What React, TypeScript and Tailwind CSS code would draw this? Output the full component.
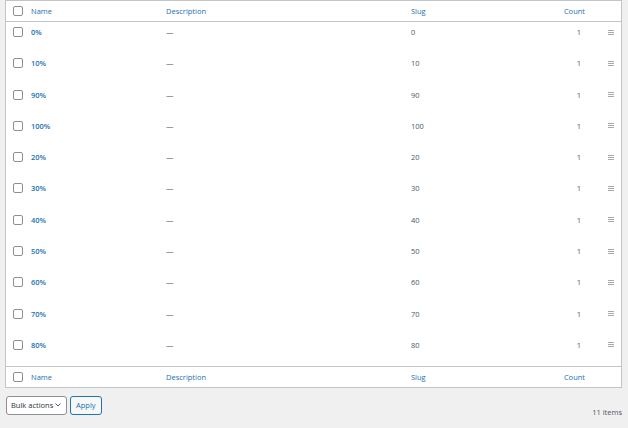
import React from "react";

const rows = [
  ["0%", "0"],
  ["10%", "10"],
  ["90%", "90"],
  ["100%", "100"],
  ["20%", "20"],
  ["30%", "30"],
  ["40%", "40"],
  ["50%", "50"],
  ["60%", "60"],
  ["70%", "70"],
  ["80%", "80"],
];

function Check() {
  return <div className="w-[10px] h-[10px] rounded-[2px] border border-[#8c8f94] bg-white" />;
}

function Handle() {
  return (
    <div className="flex flex-col gap-[1px] w-[6px]">
      <div className="h-[1px] bg-[#a7aaad]" />
      <div className="h-[1px] bg-[#a7aaad]" />
      <div className="h-[1px] bg-[#a7aaad]" />
    </div>
  );
}

function HeadRow({ top }: { top?: boolean }) {
  return (
    <div
      className={`flex items-center h-[21px] text-[#2271b1] ${top ? "border-b" : "border-t"} border-[#c3c4c7]`}
    >
      <div className="w-[25px] pl-[7px] flex items-center">
        <Check />
      </div>
      <div className="w-[135px]">Name</div>
      <div className="w-[245px]">Description</div>
      <div className="w-[120px]">Slug</div>
      <div className="w-[54px] text-right">Count</div>
    </div>
  );
}

export default function App() {
  return (
    <div
      className="w-[628px] h-[428px] bg-[#f0f0f1] overflow-hidden text-[7.5px] leading-[10px] text-[#50575e]"
      style={{ fontFamily: '"Open Sans", "Noto Sans", sans-serif' }}
    >
      <div className="ml-[5px] w-[617px] bg-white border border-[#c3c4c7]">
        <HeadRow top />
        {rows.map(([name, slug]) => (
          <div key={name} className="flex items-start h-[31.3px] pt-[5px]">
            <div className="w-[25px] pl-[7px] h-[10px] flex items-center">
              <Check />
            </div>
            <div className="w-[135px] text-[#2271b1] font-semibold">{name}</div>
            <div className="w-[245px]">—</div>
            <div className="w-[120px]">{slug}</div>
            <div className="w-[54px] text-right pr-[4px]">1</div>
            <div className="ml-[23px] h-[10px] flex items-center">
              <Handle />
            </div>
          </div>
        ))}
        <HeadRow />
      </div>
      <div className="flex items-center mt-[5px] ml-[6px] mr-[6px]">
        <div className="flex items-center justify-between h-[19px] w-[61px] pl-[4px] pr-[5px] border border-[#8c8f94] rounded-[3px] bg-white text-[#2c3338] whitespace-nowrap">
          <span>Bulk actions</span>
          <svg width="6" height="4" viewBox="0 0 6 4" fill="none">
            <path d="M0.5 0.5l2.5 2.5L5.5 0.5" stroke="#50575e" strokeWidth="1" />
          </svg>
        </div>
        <div className="ml-[3px] h-[19px] px-[5px] flex items-center border border-[#2271b1] rounded-[3px] bg-[#f6f7f7] text-[#2271b1]">
          Apply
        </div>
        <div className="ml-auto mt-[14px] text-[#50575e]">11 items</div>
      </div>
    </div>
  );
}
